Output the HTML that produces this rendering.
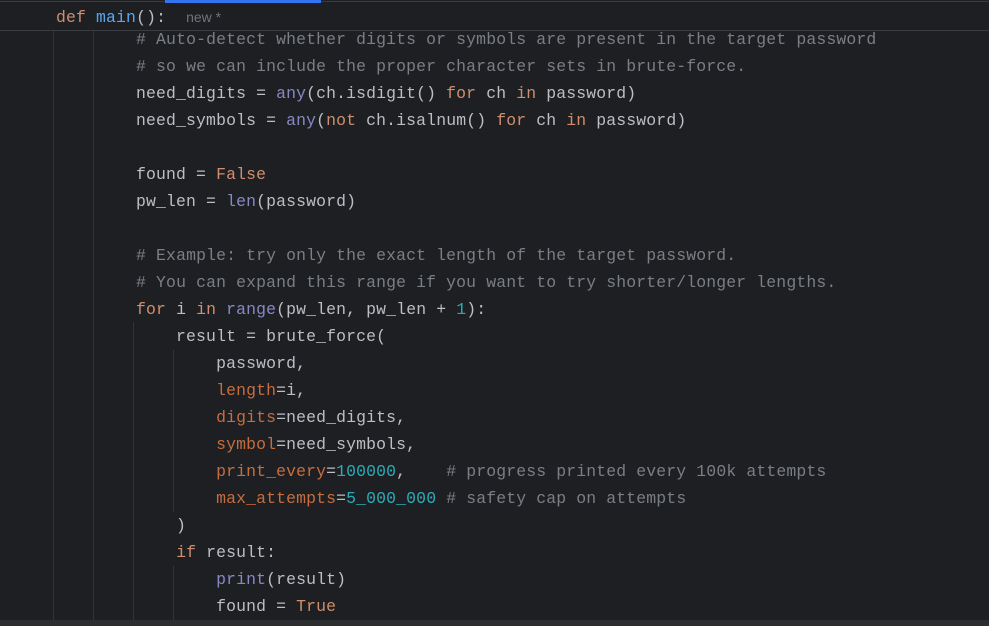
<!DOCTYPE html>
<html><head><meta charset="utf-8">
<style>
html,body{margin:0;padding:0;}
body{width:989px;height:626px;background:#1e1f22;position:relative;overflow:hidden;font-family:"Liberation Mono",monospace;font-size:16.45px;color:#bcbec4;}
.l{position:absolute;left:0;height:27px;line-height:27px;white-space:pre;letter-spacing:0.14px;}
.k{color:#cf8e6d}.f{color:#56a8f5}.c{color:#7a7e85}.b{color:#8888c6}.p{color:#c66d3f}.n{color:#2aacb8}
.g{position:absolute;width:1px;background:#313338;top:31px;height:589px;}
</style></head><body>
<div style="position:absolute;left:0;top:1px;width:989px;height:1px;background:#393b40"></div>
<div style="position:absolute;left:165px;top:0;width:156px;height:3px;background:#3574f0"></div>
<div style="position:absolute;left:0;top:30px;width:989px;height:1px;background:#393b40"></div>
<div style="position:absolute;left:0;top:620px;width:989px;height:6px;background:#2b2d30"></div>
<div class="g" style="left:53px"></div>
<div class="g" style="left:93px"></div>
<div class="g" style="left:133px;top:322px;height:298px"></div>
<div class="g" style="left:173px;top:350px;height:162px"></div>
<div class="g" style="left:173px;top:566px;height:54px"></div>
<div class="l" style="left:56px;top:4px"><span class="k">def</span> <span class="f">main</span>():  <span style="color:#6f737a;font-family:'Liberation Sans',sans-serif;font-size:14px;letter-spacing:0">new *</span></div>
<div id="code" style="position:absolute;left:56px;top:25.5px">
<div class="l" style="top:0">        <span class="c"># Auto-detect whether digits or symbols are present in the target password</span></div>
<div class="l" style="top:27px">        <span class="c"># so we can include the proper character sets in brute-force.</span></div>
<div class="l" style="top:54px">        need_digits = <span class="b">any</span>(ch.isdigit() <span class="k">for</span> ch <span class="k">in</span> password)</div>
<div class="l" style="top:81px">        need_symbols = <span class="b">any</span>(<span class="k">not</span> ch.isalnum() <span class="k">for</span> ch <span class="k">in</span> password)</div>
<div class="l" style="top:135px">        found = <span class="k">False</span></div>
<div class="l" style="top:162px">        pw_len = <span class="b">len</span>(password)</div>
<div class="l" style="top:216px">        <span class="c"># Example: try only the exact length of the target password.</span></div>
<div class="l" style="top:243px">        <span class="c"># You can expand this range if you want to try shorter/longer lengths.</span></div>
<div class="l" style="top:270px">        <span class="k">for</span> i <span class="k">in</span> <span class="b">range</span>(pw_len, pw_len + <span class="n">1</span>):</div>
<div class="l" style="top:297px">            result = brute_force(</div>
<div class="l" style="top:324px">                password,</div>
<div class="l" style="top:351px">                <span class="p">length</span>=i,</div>
<div class="l" style="top:378px">                <span class="p">digits</span>=need_digits,</div>
<div class="l" style="top:405px">                <span class="p">symbol</span>=need_symbols,</div>
<div class="l" style="top:432px">                <span class="p">print_every</span>=<span class="n">100000</span>,    <span class="c"># progress printed every 100k attempts</span></div>
<div class="l" style="top:459px">                <span class="p">max_attempts</span>=<span class="n">5_000_000</span> <span class="c"># safety cap on attempts</span></div>
<div class="l" style="top:486px">            )</div>
<div class="l" style="top:513px">            <span class="k">if</span> result:</div>
<div class="l" style="top:540px">                <span class="b">print</span>(result)</div>
<div class="l" style="top:567px">                found = <span class="k">True</span></div>
</div>
</body></html>
